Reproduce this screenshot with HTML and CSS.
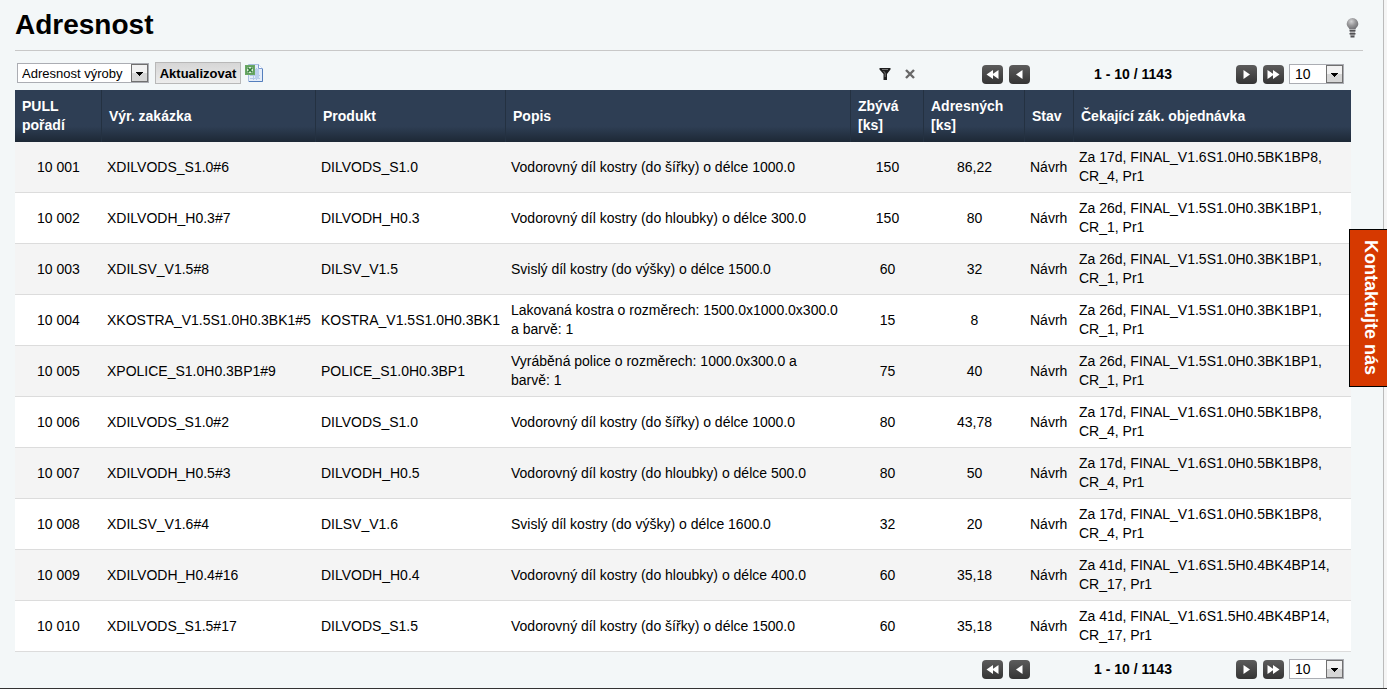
FILE: index.html
```html
<!DOCTYPE html>
<html lang="cs">
<head>
<meta charset="utf-8">
<title>Adresnost</title>
<link rel="stylesheet" href="styles.css">
</head>
<body>
<svg class="defs" aria-hidden="true">
  <symbol id="prev" viewBox="0 0 21 19"><path d="M13.500 5v9L7 9.500z"/></symbol>
  <symbol id="first" viewBox="0 0 21 19"><path d="M11 5v9L4.500 9.500zM16.500 5v9l-6.500-4.500z"/></symbol>
  <symbol id="next" viewBox="0 0 21 19"><path d="M7.500 5v9l6.500-4.500z"/></symbol>
  <symbol id="last" viewBox="0 0 21 19"><path d="M4.500 5v9l6.500-4.500zM10 5v9l6.500-4.500z"/></symbol>
  <symbol id="drop" viewBox="0 0 15 16"><path d="M4 7h7v1h-1v1H9v1H8v1H7v-1H6V9H5V8H4z"/></symbol>
</svg>
<main class="page">
  <header class="page-header">
    <h1 class="title">Adresnost</h1>
    <button class="icon-button hint" type="button" aria-label="Nápověda">
      <svg width="13" height="20" viewBox="0 0 13 20">
        <defs><radialGradient id="bulb" cx="0.4" cy="0.3" r="0.7"><stop offset="0" stop-color="#d2d2d4"/><stop offset="0.5" stop-color="#99999b"/><stop offset="1" stop-color="#707074"/></radialGradient></defs>
        <path d="M6.500 0a5.800 5.800 0 0 1 5.800 5.800c0 3-2.300 3.500-2.800 5.700h-6C3 9.300 0.700 8.800 0.700 5.800A5.800 5.800 0 0 1 6.500 0z" fill="url(#bulb)"/>
        <path d="M4 11.500h5v6H4z" fill="#b5b5b7"/>
        <path d="M3.500 12h6v1.500h-6zM3.500 15h6v1.500h-6zM4.500 17.500h4v2h-4z" fill="#515154"/>
      </svg>
    </button>
  </header>
  <div class="content">
    <div class="toolbar">
      <form class="view-form">
        <span class="select view"><select aria-label="Pohled"><option>Adresnost výroby</option></select><svg class="arrow"><use href="#drop"/></svg></span>
        <button class="refresh" type="button">Aktualizovat</button>
        <button class="icon-button excel" type="button" aria-label="Export do Excelu">
          <svg width="18" height="19" viewBox="0 0 18 19">
            <path d="M3.500 0.500h10l4 4v13h-14z" fill="#e4edfa" stroke="#a9bfe2"/>
            <path d="M5 11.500h10M5 14.500h10M11.500 4v12M8.500 11v5" stroke="#b4c9e9" fill="none"/>
            <path d="M10 5h4v10h-4z" fill="#bcd0ee"/>
            <path d="M13.500 0.500v4h4" fill="#fff" stroke="#7f9fd2"/>
            <path d="M17.500 5v12.500H4" fill="none" stroke="#547fbd"/>
            <rect x="0.500" y="1.500" width="9" height="9" fill="#5fa05c" stroke="#6aa865"/>
            <rect x="2" y="3" width="6" height="6" fill="#dcebd9"/>
            <path d="M2.500 3.500l5 5M7.500 3.500l-5 5" stroke="#2f7d35" stroke-width="1.600"/>
          </svg>
        </button>
      </form>
      <div class="filters">
        <button class="icon-button" type="button" aria-label="Filtr">
          <svg width="12" height="12" viewBox="0 0 12 12"><path d="M0.500 0h11v1.500L8 6v6H4.500V6L0.500 1.500z" fill="#1e1e1e"/><path d="M3 1.500h6M4.500 3L6.200 5v4" fill="none" stroke="#8c8c8c" stroke-width="0.800"/></svg>
        </button>
        <button class="icon-button" type="button" aria-label="Zrušit filtr">
          <svg width="10" height="10" viewBox="0 0 10 10"><path d="M1 1l8 8M9 1L1 9" stroke="#686868" stroke-width="2.400"/></svg>
        </button>
      </div>
      <nav class="pager" aria-label="Stránkování nahoře">
        <button class="page-button" type="button" aria-label="První"><svg><use href="#first"/></svg></button>
        <button class="page-button" type="button" aria-label="Předchozí"><svg><use href="#prev"/></svg></button>
        <span class="range">1 - 10 / 1143</span>
        <button class="page-button" type="button" aria-label="Další"><svg><use href="#next"/></svg></button>
        <button class="page-button" type="button" aria-label="Poslední"><svg><use href="#last"/></svg></button>
        <span class="select size"><select aria-label="Řádků na stránku"><option>10</option></select><svg class="arrow"><use href="#drop"/></svg></span>
      </nav>
    </div>
    <table class="grid">
      <colgroup><col class="c-order"><col class="c-job"><col class="c-product"><col class="c-desc"><col class="c-left"><col class="c-addr"><col class="c-state"><col></colgroup>
      <thead>
        <tr><th>PULL pořadí</th><th>Výr. zakázka</th><th>Produkt</th><th>Popis</th><th>Zbývá [ks]</th><th>Adresných [ks]</th><th>Stav</th><th>Čekající zák. objednávka</th></tr>
      </thead>
      <tbody>
        <tr><td class="num">10 001</td><td>XDILVODS_S1.0#6</td><td>DILVODS_S1.0</td><td>Vodorovný díl kostry (do šířky) o délce 1000.0</td><td class="num">150</td><td class="num">86,22</td><td>Návrh</td><td>Za 17d, FINAL_V1.6S1.0H0.5BK1BP8, CR_4, Pr1</td></tr>
        <tr><td class="num">10 002</td><td>XDILVODH_H0.3#7</td><td>DILVODH_H0.3</td><td>Vodorovný díl kostry (do hloubky) o délce 300.0</td><td class="num">150</td><td class="num">80</td><td>Návrh</td><td>Za 26d, FINAL_V1.5S1.0H0.3BK1BP1, CR_1, Pr1</td></tr>
        <tr><td class="num">10 003</td><td>XDILSV_V1.5#8</td><td>DILSV_V1.5</td><td>Svislý díl kostry (do výšky) o délce 1500.0</td><td class="num">60</td><td class="num">32</td><td>Návrh</td><td>Za 26d, FINAL_V1.5S1.0H0.3BK1BP1, CR_1, Pr1</td></tr>
        <tr><td class="num">10 004</td><td>XKOSTRA_V1.5S1.0H0.3BK1#5</td><td>KOSTRA_V1.5S1.0H0.3BK1</td><td>Lakovaná kostra o rozměrech: 1500.0x1000.0x300.0 a barvě:&nbsp;1</td><td class="num">15</td><td class="num">8</td><td>Návrh</td><td>Za 26d, FINAL_V1.5S1.0H0.3BK1BP1, CR_1, Pr1</td></tr>
        <tr><td class="num">10 005</td><td>XPOLICE_S1.0H0.3BP1#9</td><td>POLICE_S1.0H0.3BP1</td><td>Vyráběná police o rozměrech: 1000.0x300.0 a barvě:&nbsp;1</td><td class="num">75</td><td class="num">40</td><td>Návrh</td><td>Za 26d, FINAL_V1.5S1.0H0.3BK1BP1, CR_1, Pr1</td></tr>
        <tr><td class="num">10 006</td><td>XDILVODS_S1.0#2</td><td>DILVODS_S1.0</td><td>Vodorovný díl kostry (do šířky) o délce 1000.0</td><td class="num">80</td><td class="num">43,78</td><td>Návrh</td><td>Za 17d, FINAL_V1.6S1.0H0.5BK1BP8, CR_4, Pr1</td></tr>
        <tr><td class="num">10 007</td><td>XDILVODH_H0.5#3</td><td>DILVODH_H0.5</td><td>Vodorovný díl kostry (do hloubky) o délce 500.0</td><td class="num">80</td><td class="num">50</td><td>Návrh</td><td>Za 17d, FINAL_V1.6S1.0H0.5BK1BP8, CR_4, Pr1</td></tr>
        <tr><td class="num">10 008</td><td>XDILSV_V1.6#4</td><td>DILSV_V1.6</td><td>Svislý díl kostry (do výšky) o délce 1600.0</td><td class="num">32</td><td class="num">20</td><td>Návrh</td><td>Za 17d, FINAL_V1.6S1.0H0.5BK1BP8, CR_4, Pr1</td></tr>
        <tr><td class="num">10 009</td><td>XDILVODH_H0.4#16</td><td>DILVODH_H0.4</td><td>Vodorovný díl kostry (do hloubky) o délce 400.0</td><td class="num">60</td><td class="num">35,18</td><td>Návrh</td><td>Za 41d, FINAL_V1.6S1.5H0.4BK4BP14, CR_17, Pr1</td></tr>
        <tr><td class="num">10 010</td><td>XDILVODS_S1.5#17</td><td>DILVODS_S1.5</td><td>Vodorovný díl kostry (do šířky) o délce 1500.0</td><td class="num">60</td><td class="num">35,18</td><td>Návrh</td><td>Za 41d, FINAL_V1.6S1.5H0.4BK4BP14, CR_17, Pr1</td></tr>
      </tbody>
    </table>
    <div class="bottom-bar">
      <nav class="pager" aria-label="Stránkování dole">
        <button class="page-button" type="button" aria-label="První"><svg><use href="#first"/></svg></button>
        <button class="page-button" type="button" aria-label="Předchozí"><svg><use href="#prev"/></svg></button>
        <span class="range">1 - 10 / 1143</span>
        <button class="page-button" type="button" aria-label="Další"><svg><use href="#next"/></svg></button>
        <button class="page-button" type="button" aria-label="Poslední"><svg><use href="#last"/></svg></button>
        <span class="select size"><select aria-label="Řádků na stránku"><option>10</option></select><svg class="arrow"><use href="#drop"/></svg></span>
      </nav>
    </div>
  </div>
</main>
<a class="contact" href="#kontakt">Kontaktujte nás</a>
</body>
</html>
```
FILE: styles.css
```css
* { box-sizing: border-box; }

body {
  margin: 0;
  padding-right: 3px;
  background: #f5f5f5;
  border-bottom: 1px solid #333;
  color: #000;
  font: 14px/19px "Liberation Sans", Arial, sans-serif;
}

button, select { font-family: inherit; color: inherit; }
svg { display: block; }
.defs { display: none; }

.page {
  padding: 0 20px 0 15px;
  background: #f3f7f8;
  border-right: 1px solid #bbb;
}

.page-header {
  display: flex;
  justify-content: space-between;
  align-items: center;
  height: 51px;
  border-bottom: 1px solid #c8c8c8;
}

.title { margin: 0; font-size: 28px; line-height: 32px; }

.icon-button {
  padding: 0;
  border: 0;
  background: none;
}

.hint { margin: 6px 4px 0 0; }

.content { margin-right: 12px; }

.toolbar, .bottom-bar {
  display: flex;
  align-items: center;
  padding-right: 7px;
}

.toolbar { height: 39px; padding-top: 7px; }
.bottom-bar { height: 36px; padding-bottom: 2px; justify-content: flex-end; }

.view-form {
  display: flex;
  align-items: center;
  gap: 4px;
  margin: 0 auto 2px 2px;
}

.select { position: relative; display: block; height: 20px; }

.select select {
  appearance: none;
  display: block;
  width: 100%;
  height: 100%;
  padding: 0 20px 0 4px;
  border: 1px solid #abadb3;
  border-radius: 0;
  background: #fff;
  font-size: 13px;
}

.select.size select { padding-left: 5px; font-size: 14px; }

.arrow {
  position: absolute;
  top: 1px;
  right: 1px;
  width: 17px;
  height: 18px;
  border: 1px solid #707070;
  background: linear-gradient(#f2f2f2 50%, #d6d6d6 50%);
  pointer-events: none;
}

.view { width: 132px; margin-right: 2px; }
.size { width: 55px; }

.refresh {
  width: 86px;
  height: 22px;
  padding: 0;
  border: 1px solid #b8b8b8;
  background: linear-gradient(#d6d6d6, #ececec);
  font-size: 13px;
  font-weight: bold;
}

.filters {
  display: flex;
  align-items: center;
  gap: 14px;
  margin-right: 67px;
}

.pager { display: flex; align-items: center; gap: 6px; }
.pager .size { margin-left: -1px; }

.page-button {
  width: 21px;
  height: 19px;
  padding: 0;
  border: 0;
  border-radius: 4px;
  background: linear-gradient(#5c5c5c, #343434);
}

.page-button svg { width: 21px; height: 19px; fill: #fff; }

.range { width: 194px; text-align: center; font-weight: bold; }

.grid {
  width: 100%;
  table-layout: fixed;
  border-collapse: separate;
  border-spacing: 0;
}

.c-order { width: 87px; }
.c-job { width: 214px; }
.c-product { width: 190px; }
.c-desc { width: 345px; }
.c-left { width: 73px; }
.c-addr { width: 101px; }
.c-state { width: 49px; }

.grid th {
  padding: 7px;
  border-right: 1px solid #243141;
  background: linear-gradient(#2e3e54 70%, #1d2835);
  color: #fff;
  text-align: left;
}

.grid th:last-child { border-right: 0; }

.grid td {
  height: 51px;
  padding: 6px 5px;
  border-bottom: 1px solid #dcdcdc;
  background: #fff;
}

.grid tr:nth-child(odd) td { background: #f4f4f4; }
.grid .num { text-align: center; }

.contact {
  position: fixed;
  top: 229px;
  right: 0;
  width: 38px;
  height: 158px;
  padding-top: 10px;
  border: 1px solid #000;
  border-right: 0;
  background: #d63900;
  color: #fff;
  font-size: 18px;
  font-weight: bold;
  line-height: 32px;
  text-decoration: none;
  writing-mode: vertical-rl;
  white-space: nowrap;
}
```
